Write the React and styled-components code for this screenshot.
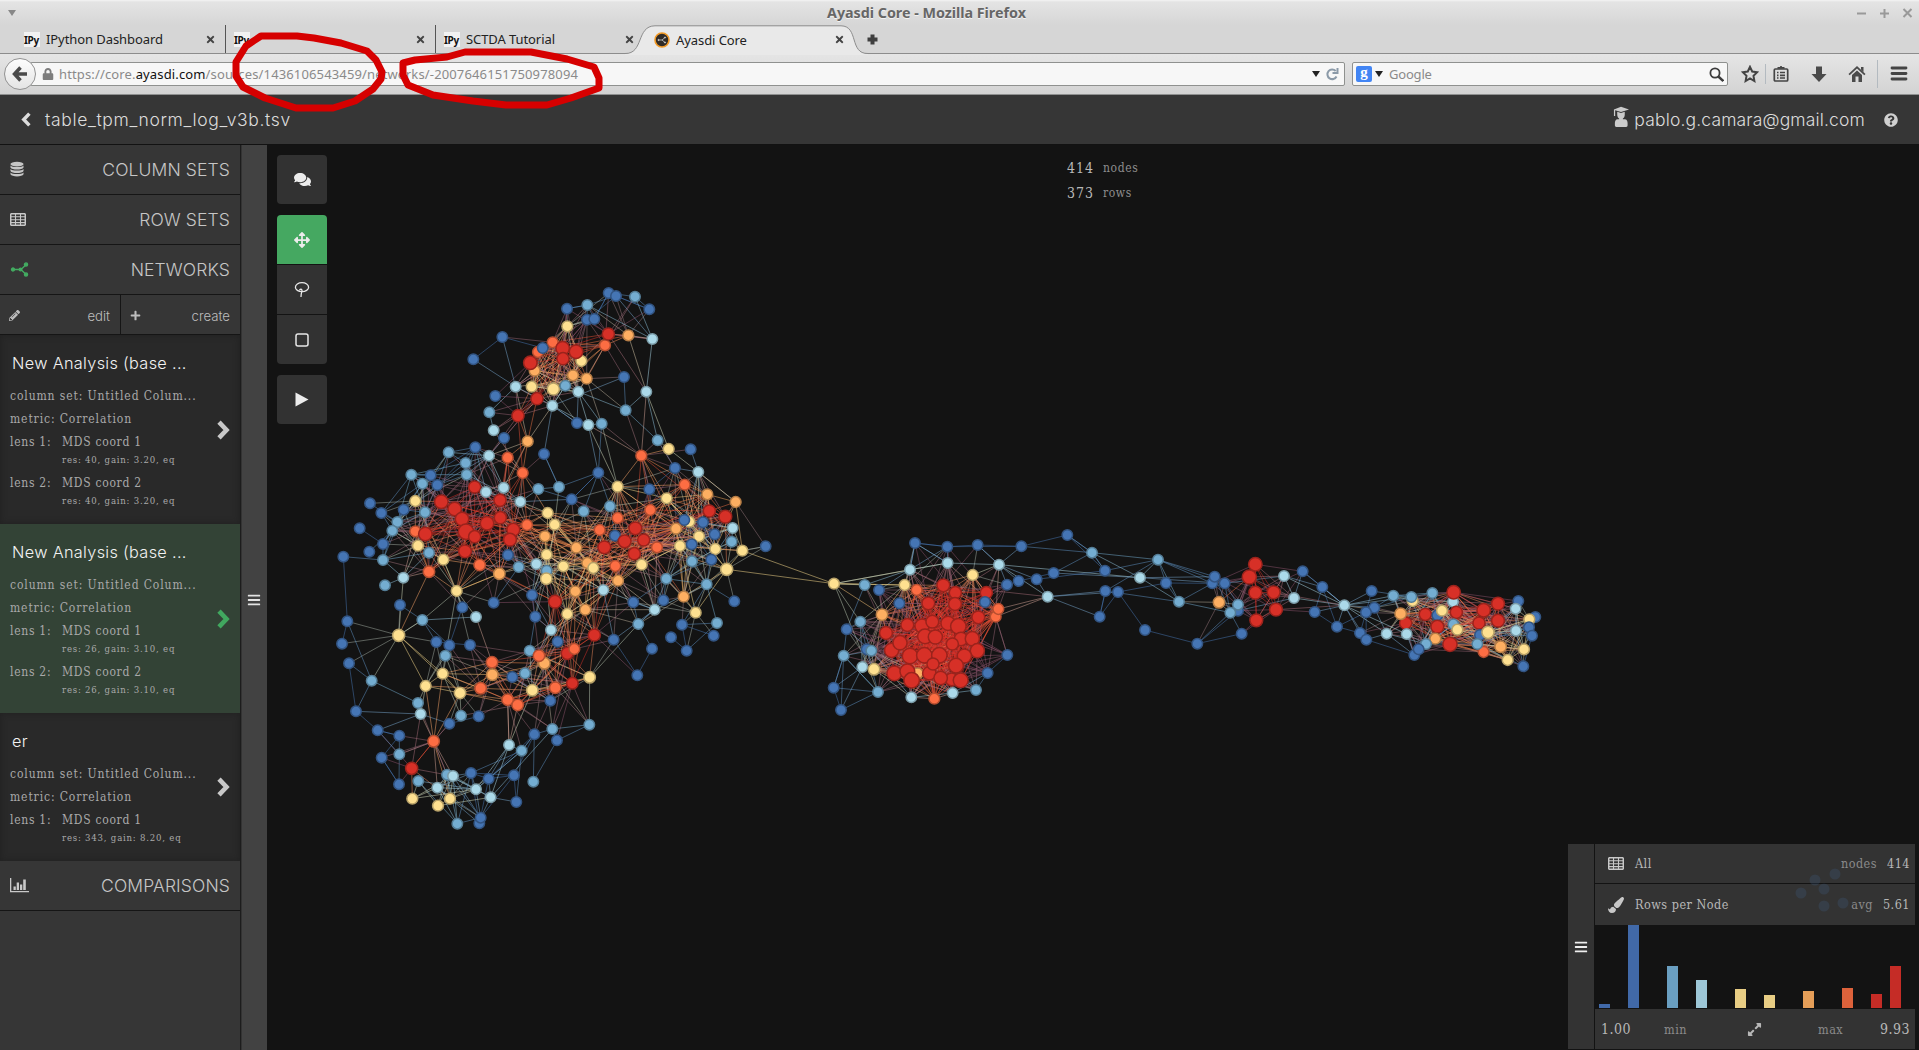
import React from 'react';
import styled, { createGlobalStyle, css } from 'styled-components';
import {
  FaComments, FaPencilAlt, FaPlus, FaArrowsAlt, FaPlay,
  FaBars, FaPaintBrush, FaExpandAlt, FaQuestionCircle, FaLock, FaTimes,
} from 'react-icons/fa';

const slab = `"DejaVu Serif Condensed", "DejaVu Serif", serif`;
const sans = `Inter, "Open Sans", sans-serif`;
const chromeFont = `"Noto Sans", "Open Sans", sans-serif`;

const Global = createGlobalStyle`
  * { box-sizing: border-box; }
  html, body { margin: 0; padding: 0; background: #131313; overflow: hidden; }
  svg { display: block; flex: none; }
`;

/* ---------- network data: three units per pixel, offset by group origin ---------- */

const GROUPS = [
  { id: 'a', x: 330, y: 280, nodes: `b 517 171,b 430 238,l 557 320,b 496 348,s 478 397,l 491 451,b 522 474,b 436 502,s 356 517,l 477 527,s 407 549,s 410 584,O 533 533,o 593 484,O 578 579,b 642 522,r 564 407,r 621 356,y 605 320,o 614 272,O 624 216,O 668 187,r 601 248 22,b 638 204,l 667 377,y 670 327 20,s 244 584,b 302 586,s 277 611,b 322 615,r 434 621,l 468 636,l 521 623,r 510 661,l 571 665,s 625 627,s 687 621,y 256 663,r 334 665 22,r 374 687 22,b 120 670,b 154 699,b 221 689,s 285 697,s 202 726,s 187 752,b 89 745,O 256 754,r 286 762 22,r 396 717 22,r 408 755 25,r 434 770,r 471 730 22,r 511 713,r 550 749 21,r 540 779 21,O 591 735,y 653 699,y 674 734,o 645 769,y 264 797,b 159 792` },
  { id: 'a', x: 550, y: 280, nodes: `b 51 86,s 112 75,b 176 39,b 198 48,s 255 50,b 298 88,b 111 119,b 133 117,y 52 139,O 165 196,r 175 162,o 235 166,l 307 177,r 38 205 22,y 94 243,r 78 215 22,r 39 236,o 69 286,o 110 296,s 46 317,l 85 335,b 222 291,l 289 335,s 227 391,b 81 429,l 115 435,s 155 431,s 323 481,y 356 507,b 422 508,O 274 527,b 375 564,l 445 576,b 145 578,b 65 658,s 101 694,y 203 620,s 180 679,b 298 628,O 404 614,y 350 655,O 301 690,o 472 643,o 557 666,r 478 693,r 526 710 21,y 418 725,b 403 720,b 459 727,l 548 744,y 447 769,b 494 763,o 378 746,O 203 714,O 149 750,r 256 745 21,b 195 767,r 224 784 21,r 281 780,O 321 802,o 79 803,s 545 785,y 390 798,b 425 793,y 496 807,y 577 812,b 647 799,r 163 802 21` },
  { id: 'a', x: 330, y: 540, nodes: `b 40 50,s 159 60,b 118 35,O 297 95 19,y 340 59,s 297 38,r 405 34 21,O 449 75 19,o 508 101 19,b 534 45,s 566 81,l 619 72,s 650 92,y 650 44,y 649 116 19,l 220 113,s 165 136,y 380 153,b 210 195,b 397 202,b 491 188,l 438 231,s 277 240,b 606 165,r 675 185 21,b 616 230,l 663 270,b 683 305,b 52 244,b 36 311,b 57 370,y 206 286 20,b 319 306,b 358 316,b 420 315,s 346 347,s 125 422,y 338 401,y 287 438,O 486 367 19,o 487 404 19,y 390 459 19,O 452 445 19,b 547 411,s 585 400,s 599 332,o 643 370 19,O 627 347 19,y 607 451 19,O 533 479 19,O 563 495 19,O 676 443 19,b 661 482,s 264 489,l 272 522,s 393 527,b 446 529,b 358 551,b 78 514,b 143 571,b 208 587,s 208 643,b 155 653,O 311 604 19,r 245 685,b 207 733,s 265 723,s 351 704,l 369 708,b 423 699,b 476 716,l 322 743,l 438 748,l 482 772,y 247 776,y 360 776,y 324 797,s 382 851,b 448 850,b 452 833,b 559 786,b 552 706,s 610 725,l 537 615,s 575 632,b 613 583,s 667 567,b 681 601` },
  { id: 'a', x: 560, y: 540, nodes: `r 223 41,s 396 64,b 454 59,y 500 88 20,s 440 133,y 245 74,O 166 78,o 82 69,y 100 84,y 10 79,o 174 122,s 319 116,l 130 150,o 46 154,b 220 187,b 310 181,o 371 170,b 523 184,o 76 209,y 22 222,l 284 209,y 407 218,s 235 252,b 366 254,s 471 249,b 161 299,b 333 292,b 461 287,r 103 285 20,b 276 326,b 380 332,r 22 340 20,O 43 327,b 232 406,y 89 412 19,r 37 430 19,s 88 554` },
  { id: 'e', x: 810, y: 510, nodes: `y 72 221,s 164 225,b 207 240,y 284 225,O 320 240,l 300 179,b 315 99,b 412 110,b 503 105,l 413 159,l 567 164,b 634 109,b 772 75,s 846 128,b 885 182,b 731 189,b 680 208,b 626 213,b 591 224,y 488 195,l 713 260,r 400 226 21,r 436 248,r 529 248,b 525 276,O 557 320,O 565 297,r 355 280 21,r 435 282 21,r 505 322 21,b 268 280,o 216 314 19,s 151 335,b 110 358,r 228 369 21,r 292 345 21,r 336 348 23,r 367 335 21,r 414 340 23,r 445 349 25,r 345 379 24,r 376 381 23,r 245 421 23,r 270 398 23,r 453 387 22,r 487 386 23,r 427 402,r 502 422 23,r 300 438 25,r 343 436 25,r 388 436 25,r 463 438 23,r 438 467 24,r 253 490 24,o 323 490,r 292 484 24,r 358 490 22,r 369 462,r 305 511 25,r 425 508 21,r 392 504 22,r 452 511 24,b 170 418,s 184 422,s 101 437,l 157 471,y 192 478 19,s 204 546,l 304 562,O 373 566,l 428 549,s 498 540,b 533 489,b 592 435,b 71 533,b 93 600,b 886 243,b 924 246,b 869 320` },
  { id: 'f', x: 1130, y: 510, nodes: `s 84 149,l 30 203,b 108 219,s 147 275,b 247 220,b 254 200,b 284 220,o 267 277 19,b 324 302,s 324 284,s 301 308,b 335 371,b 202 401,b 45 360,r 376 163 22,r 358 201 23,r 376 248 21,r 431 247 21,r 438 299 21,r 379 331 21,l 462 198,b 518 184,b 577 231,l 492 264,b 554 306,l 643 286,b 621 350,b 690 369,b 709 389,b 725 243,b 733 293,b 708 307,s 790 257,y 848 273,s 844 261,s 907 249,l 969 275,r 971 247 22,r 827 339,o 812 311 19,r 886 313 20,b 922 316,y 936 302,r 979 307,s 970 343,r 922 350 21,y 982 359,o 916 386,s 888 402,b 853 435,b 866 418,l 770 371,l 830 372,r 960 403 23,r 1104 281 21,r 1061 301 22,r 1047 339,r 1104 332 21,b 1165 273,l 1157 296,b 1216 321,y 1198 328,b 1197 352,l 1158 362,b 1206 377,b 1050 375,y 1074 367 20,O 1061 426,s 1042 402,o 1112 410 19,y 1182 418,y 1133 450,b 1180 469` },
];

const TONES = {
  b: [69, 117, 180], s: [116, 173, 209], l: [171, 217, 233], y: [254, 224, 144],
  o: [253, 174, 97], O: [252, 109, 67], r: [215, 48, 39],
};
const WEIGHT = { b: 0, s: 1, l: 2, y: 3, o: 4, O: 5, r: 6 };

const NODES = GROUPS.flatMap((g) => g.nodes.split(',').map((entry) => {
  const [tone, x, y, r] = entry.trim().split(' ');
  return {
    group: g.id, tone, x: g.x + x / 3, y: g.y + y / 3,
    r: (r ? Number(r) : tone === 'r' ? 20 : 'oOy'.includes(tone) ? 18 : 17.5) / 3 - 0.6,
  };
}));

/* empty regions that no link may cross: cx, cy, rx, ry */
const HOLES = [
  [578, 440, 21, 12], [596, 452, 18, 10], [568, 447, 10, 10], [505, 625, 22, 18], [470, 745, 33, 20], [376, 660, 22, 24],
  [620, 382, 17, 10], [538, 460, 8, 13], [365, 603, 14, 12], [450, 372, 14, 20], [578, 462, 14, 12],
  [625, 662, 20, 22], [545, 790, 12, 18], [1100, 577, 18, 8], [1140, 600, 18, 18],
  [1310, 625, 20, 8], [435, 703, 6, 10], [1040, 560, 26, 7], [372, 710, 8, 10], [615, 470, 8, 8],
];

const LONG_LINKS = [
  [502, 337, 474, 359], [502, 337, 543, 348], [502, 337, 516, 387], [474, 359, 516, 387],
  [344, 556, 347, 621], [742, 547, 834, 584], [727, 569, 834, 584], [766, 546, 742, 547],
  [834, 584, 905, 585], [834, 584, 865, 585], [834, 584, 910, 570], [834, 584, 882, 615],
  [834, 584, 861, 622], [834, 584, 948, 563], [834, 584, 860, 690], [834, 584, 906, 588],
  [647, 391, 651, 339], [647, 391, 641, 456], [646, 392, 608, 333], [624, 377, 552, 406],
  [624, 377, 626, 410], [646, 392, 669, 449], [646, 392, 658, 440], [626, 410, 658, 440],
  [626, 410, 641, 456], [579, 392, 626, 410], [578, 392, 602, 424], [587, 379, 624, 377],
  [588, 425, 641, 456], [588, 425, 618, 487], [602, 424, 618, 487], [588, 425, 598, 473], [602, 424, 598, 473],
  [598, 473, 560, 487], [598, 473, 572, 499], [598, 473, 584, 511], [552, 406, 544, 454], [544, 454, 559, 487], [544, 454, 523, 473],
  [552, 406, 577, 423], [651, 339, 608, 333], [628, 335, 646, 392], [641, 456, 649, 489], [641, 456, 675, 471],
  [567, 309, 608, 333], [587, 305, 616, 296], [608, 293, 635, 297], [616, 296, 649, 309], [635, 297, 651, 339],
  [608, 293, 567, 326], [608, 293, 605, 345], [616, 296, 628, 335], [635, 297, 608, 333], [649, 309, 628, 335],
  [649, 309, 608, 333], [587, 305, 628, 335], [567, 309, 563, 348], [587, 320, 576, 351], [594, 319, 608, 333],
  [587, 320, 563, 348], [594, 319, 567, 326], [608, 293, 594, 319], [649, 309, 616, 296], [587, 305, 651, 339],
  [616, 296, 651, 339], [635, 297, 605, 345], [567, 309, 563, 358], [587, 305, 553, 342], [567, 309, 587, 305],
  [399, 635, 347, 621], [399, 635, 342, 644], [399, 635, 349, 663], [399, 635, 372, 681],
  [399, 635, 426, 686], [399, 635, 443, 674], [399, 635, 403, 578], [399, 635, 400, 605], [399, 635, 460, 693], [399, 635, 436, 642],
  [399, 635, 422, 620], [399, 635, 429, 572], [372, 681, 347, 621], [372, 681, 349, 663], [372, 681, 356, 711],
  [372, 681, 418, 703], [349, 663, 356, 711], [356, 711, 378, 730], [356, 711, 420, 714], [422, 620, 476, 617],
  [457, 591, 443, 560], [457, 591, 499, 574], [457, 591, 463, 607], [499, 574, 532, 584], [534, 603, 556, 557],
  [378, 730, 399, 754], [378, 730, 420, 714], [378, 730, 399, 736], [433, 741, 412, 768], [433, 741, 447, 775], [433, 741, 453, 776],
  [433, 741, 418, 703], [433, 741, 421, 714], [433, 741, 449, 724], [433, 741, 399, 736], [433, 741, 399, 754],
  [433, 741, 443, 674], [433, 741, 460, 693], [433, 741, 426, 686], [382, 758, 433, 741], [382, 758, 399, 784],
  [509, 745, 508, 700], [509, 745, 518, 705], [509, 745, 489, 779], [522, 751, 489, 779], [509, 745, 476, 787], [534, 734, 522, 751],
  [534, 734, 514, 775], [534, 734, 489, 779], [553, 729, 491, 797], [557, 740, 533, 782], [534, 734, 534, 782], [589, 725, 557, 740],
  [590, 677, 589, 725], [572, 683, 589, 725], [557, 668, 589, 725], [590, 677, 614, 640], [637, 675, 652, 649], [614, 640, 637, 675],
  [572, 683, 557, 740], [590, 677, 637, 620], [594, 635, 637, 675], [569, 650, 552, 729], [557, 668, 534, 734], [572, 683, 552, 729],
  [915, 543, 947, 547], [947, 547, 978, 545], [947, 547, 1021, 546], [978, 545, 1021, 546], [1021, 546, 1067, 535], [1021, 546, 1092, 553],
  [1067, 535, 1092, 553], [1067, 535, 1105, 571], [1092, 553, 1054, 573], [1092, 553, 1158, 560], [1092, 553, 1105, 571], [1092, 553, 1140, 578],
  [1054, 573, 1140, 578], [1105, 571, 1158, 560], [1037, 579, 1105, 571], [999, 565, 1140, 578], [1048, 597, 1105, 591], [1048, 597, 1118, 592],
  [1048, 597, 1100, 617], [1105, 591, 1158, 560], [1118, 592, 1166, 583], [1105, 591, 1179, 602], [1100, 617, 1105, 591], [1100, 617, 1118, 592],
  [1113, 597, 1145, 630], [1145, 630, 1197, 644], [1197, 644, 1242, 634], [1197, 644, 1230, 613], [1197, 644, 1219, 602], [1197, 644, 1238, 610],
  [1158, 560, 1212, 583], [1158, 560, 1214, 577], [1158, 560, 1224, 583], [1140, 578, 1214, 577], [1140, 578, 1179, 602], [1166, 583, 1212, 583],
  [1179, 602, 1212, 583], [1179, 602, 1219, 602], [1179, 602, 1230, 613], [1179, 602, 1166, 583], [1158, 560, 1179, 602], [1140, 578, 1224, 583],
  [999, 565, 1048, 597], [978, 545, 999, 565], [915, 543, 910, 570], [915, 543, 948, 563], [948, 563, 999, 565], [999, 565, 1037, 579],
  [1048, 597, 996, 617], [1048, 597, 945, 590], [1007, 655, 996, 617], [1007, 655, 988, 673], [988, 673, 976, 690], [1007, 655, 977, 640], [1007, 655, 961, 645],
  [834, 688, 841, 710], [834, 688, 878, 692], [841, 710, 878, 692], [834, 688, 844, 656], [841, 710, 844, 656], [841, 710, 862, 667],
  [844, 656, 878, 692], [834, 688, 862, 667], [1302, 571, 1344, 605], [1302, 571, 1322, 587], [1284, 576, 1344, 605],
  [1322, 587, 1344, 605], [1322, 587, 1337, 627], [1344, 605, 1294, 598], [1344, 605, 1276, 609], [1344, 605, 1315, 612], [1315, 612, 1337, 627],
  [1344, 605, 1372, 591], [1344, 605, 1366, 639], [1344, 605, 1360, 633], [1344, 605, 1386, 634], [1344, 605, 1406, 634], [1344, 605, 1401, 614],
  [1344, 605, 1374, 608], [1344, 605, 1393, 596], [1344, 605, 1411, 597], [1344, 605, 1276, 592], [1337, 627, 1360, 633], [1366, 639, 1414, 655],
  [589, 725, 553, 729], [620, 539, 742, 547], [765, 546, 736, 502], [736, 502, 698, 472], [709, 473, 736, 502], [691, 449, 698, 472],
];

const nearest = (x, y) => NODES.reduce((best, n, i) => {
  const d = (n.x - x) ** 2 + (n.y - y) ** 2;
  return d < best.d ? { i, d } : best;
}, { i: 0, d: Infinity }).i;

const inHole = (a, b) => HOLES.some(([cx, cy, rx, ry]) => [0.2, 0.35, 0.5, 0.65, 0.8].some((t) => {
  const px = a.x + (b.x - a.x) * t;
  const py = a.y + (b.y - a.y) * t;
  return ((px - cx) / rx) ** 2 + ((py - cy) / ry) ** 2 < 1;
}));

const hash = (i, j) => {
  const v = Math.sin(i * 127.1 + j * 311.7) * 43758.5453;
  return v - Math.floor(v);
};

/* dense areas, where links reach further: cx, cy, radius */
const CORES = [[560, 365, 55], [455, 530, 88], [640, 540, 95], [560, 560, 70], [575, 620, 65], [500, 690, 75], [470, 785, 60], [930, 640, 100], [1255, 595, 45], [1465, 620, 95]];
const inCore = (n) => CORES.some(([cx, cy, r]) => Math.hypot(n.x - cx, n.y - cy) < r);

function buildLinks() {
  const links = [];
  for (let i = 0; i < NODES.length; i += 1) {
    for (let j = i + 1; j < NODES.length; j += 1) {
      const a = NODES[i];
      const b = NODES[j];
      if (a.group !== b.group) continue;
      const d = Math.hypot(a.x - b.x, a.y - b.y);
      const heat = (WEIGHT[a.tone] + WEIGHT[b.tone]) / 12;
      const dense = inCore(a) && inCore(b);
      const reach = (dense ? 54 : 38) + heat * 38;
      if (d > reach) continue;
      const chance = ((dense ? 0.62 : 0.42) + heat * 0.35) * (1.15 - (d / reach) * 0.65);
      if (hash(i, j) > chance || inHole(a, b)) continue;
      links.push([a, b]);
    }
  }
  LONG_LINKS.forEach(([x1, y1, x2, y2]) => links.push([NODES[nearest(x1, y1)], NODES[nearest(x2, y2)]]));
  return links;
}
const LINKS = buildLinks();

const MAUVE = [135, 82, 105];
const blend = (p, q) => {
  const span = Math.abs(WEIGHT[p] - WEIGHT[q]);
  const pull = span > 3 ? 0.45 : 0;
  return `rgb(${TONES[p].map((v, k) => Math.round(((v + TONES[q][k]) / 2) * (1 - pull) + MAUVE[k] * pull)).join(',')})`;
};
const solid = (t, f = 1) => `rgb(${TONES[t].map((v) => Math.round(v * f)).join(',')})`;

const GraphSvg = styled.svg`
  position: absolute;
  inset: 0;
`;

const Network = () => (
  <GraphSvg width="1652" height="905" viewBox="267 145 1652 905">
    <g strokeWidth="0.9" strokeOpacity="0.56">
      {LINKS.map(([a, b], i) => (
        <line key={i} x1={a.x} y1={a.y} x2={b.x} y2={b.y} stroke={blend(a.tone, b.tone)} />
      ))}
    </g>
    <g strokeWidth="1.5">
      {NODES.map((n, i) => (
        <circle key={i} cx={n.x} cy={n.y} r={n.r} fill={solid(n.tone)} stroke={solid(n.tone, 0.72)} />
      ))}
    </g>
  </GraphSvg>
);

/* ---------- browser chrome ---------- */

const Window = styled.div`
  position: relative;
  width: 1919px;
  height: 1050px;
  display: flex;
  flex-direction: column;
  background: #131313;
  overflow: hidden;
`;
const TitleBar = styled.div`
  height: 25px;
  flex: none;
  display: grid;
  grid-template-columns: 827px 1fr 81px;
  align-items: center;
  background: linear-gradient(#f4f4f4 0, #e4e4e4 2px, #d6d6d6 25px);
  font: 700 14.3px ${chromeFont};
  color: #666;
  text-shadow: 0 1px 0 #f3f3f3;
  white-space: nowrap;
`;
const MenuMark = styled.div`
  margin-left: 8px;
  width: 0;
  border: 4px solid transparent;
  border-top: 6px solid #888;
  border-bottom: 0;
`;
const TitleText = styled.span`
  letter-spacing: -0.01px;
`;
const WindowControls = styled.div`
  display: flex;
  gap: 12px;
  padding-left: 18px;
  svg { width: 11px; height: 11px; }
`;
const TabStrip = styled.div`
  height: 29px;
  flex: none;
  display: flex;
  background: #d6d6d6;
  border-bottom: 1px solid #8c8c8c;
  font: 13px ${chromeFont};
  color: #222;
`;
const Tab = styled.div`
  display: flex;
  align-items: center;
  width: ${(p) => p.$width}px;
  height: 28px;
  padding: 0 ${(p) => p.$end}px 0 ${(p) => p.$pad}px;
  ${(p) => p.$divider && css`border-right: 1px solid #555;`}
  white-space: nowrap;
`;
const ActiveTab = styled(Tab)`
  position: relative;
  height: 29px;
  > * { position: relative; }
  > svg:first-child { position: absolute; left: 0; top: 0; }
`;
const TabLabel = styled.span`
  flex: 1;
  margin-left: 6px;
  letter-spacing: -0.08px;
`;
const IPyMark = styled.span`
  width: 16px;
  height: 15px;
  background: #f2f2f2;
  color: #111;
  font: 700 10px/16px ${chromeFont};
  letter-spacing: -0.3px;
`;
const CloseMark = styled(FaTimes)`
  width: 11px;
  height: 11px;
  color: #444;
`;
const NewTab = styled.div`
  display: flex;
  align-items: center;
`;
const NavBar = styled.div`
  height: 41px;
  flex: none;
  display: flex;
  align-items: center;
  padding: 0 11px 0 4px;
  background: linear-gradient(#e5e5e5, #d3d3d3);
  border-bottom: 1px solid #8f9090;
  font: 13px ${chromeFont};
  color: #8a8a8a;
`;
const BackButton = styled.div`
  width: 32px;
  height: 32px;
  z-index: 1;
  display: grid;
  place-items: center;
  border: 1px solid #929292;
  border-radius: 50%;
  background: linear-gradient(#fdfdfd, #e4e4e4);
`;
const Field = styled.div`
  width: ${(p) => p.$width}px;
  height: 24px;
  display: flex;
  align-items: center;
  margin-left: ${(p) => p.$offset}px;
  padding: 0 ${(p) => p.$right}px 0 ${(p) => p.$left}px;
  background: #f7f7f7;
  border: 1px solid #8f918f;
  border-radius: 2px;
  white-space: nowrap;
`;
const Url = styled.span`
  flex: 1;
  margin-left: 5px;
  letter-spacing: ${(p) => p.$track}px;
  b { font-weight: 400; color: #111; }
`;
const Caret = styled.i`
  border: 4.5px solid transparent;
  border-top: 6px solid #222;
  border-bottom: 0;
  margin-right: ${(p) => p.$gap}px;
`;
const GoogleMark = styled.span`
  width: 16px;
  height: 16px;
  border-radius: 2px;
  background: #4285f4;
  color: #fff;
  font: 700 15px/12px "Liberation Serif", serif;
  text-align: center;
  margin-right: 3px;
`;
const NavTools = styled.div`
  display: flex;
  align-items: center;
  margin-left: 12px;
`;
const NavIcon = styled.svg`
  width: 18px;
  height: 18px;
  margin-left: ${(p) => p.$gap}px;
`;
const Rule = styled.span`
  width: 1px;
  height: ${(p) => p.$h}px;
  margin-left: ${(p) => p.$gap}px;
  background: #b3bac0;
`;
const Annotations = styled.svg`
  position: absolute;
  left: 0;
  top: 0;
  pointer-events: none;
`;

/* ---------- application ---------- */

const Header = styled.header`
  height: 50px;
  flex: none;
  display: flex;
  align-items: center;
  padding: 0 21px 0 21px;
  background: #363636;
  border-bottom: 1px solid #121212;
  color: #dcdcdc;
  font: 300 17.5px ${sans};
`;
const FileName = styled.span`
  flex: 1;
  margin-left: 14px;
  letter-spacing: 0.65px;
`;
const Account = styled.span`
  margin: 0 19px 0 5px;
  letter-spacing: 0.15px;
`;
const Body = styled.div`
  flex: 1;
  display: flex;
  min-height: 0;
`;
const Sidebar = styled.aside`
  width: 241px;
  flex: none;
  background: #363636;
  border-right: 1px solid #1c1c1c;
  color: #c6c6c6;
`;
const Section = styled.div`
  height: 50px;
  display: flex;
  align-items: center;
  justify-content: space-between;
  padding: 0 10px;
  border-bottom: 1px solid #151515;
  font: 300 17.5px ${sans};
  letter-spacing: 0.12px;
`;
const Actions = styled.div`
  height: 40px;
  display: grid;
  grid-template-columns: 121px 1fr;
  border-bottom: 1px solid #151515;
`;
const Action = styled.div`
  display: flex;
  align-items: center;
  justify-content: space-between;
  padding: 2px 10px 0 9px;
  border-right: ${(p) => (p.$divided ? '1px solid #151515' : 0)};
  font: 300 13.2px ${sans};
  color: #bdbdbd;
`;
const Card = styled.div`
  height: ${(p) => p.$height}px;
  display: flex;
  align-items: center;
  justify-content: space-between;
  padding: 0 10px;
  background: ${(p) => (p.$active ? '#334336' : '#292929')};
  box-shadow: ${(p) => (p.$active ? 'none' : 'inset 0 0 6px #202020')};
  color: ${(p) => (p.$active ? '#41a85f' : '#c8c8c8')};
`;
const CardBody = styled.div`
  align-self: flex-start;
  padding-top: 17px;
  font: 12px/23px ${slab};
  color: #a9a9a9;
  white-space: nowrap;
`;
const CardTitle = styled.div`
  padding-left: 2px;
  margin-bottom: 10px;
  font: 300 16.3px/23px ${sans};
  letter-spacing: 0.32px;
  color: #f2f2f2;
`;
const Line = styled.div`
  letter-spacing: 0.88px;
`;
const Lens = styled.div`
  display: grid;
  grid-template-columns: 52px auto;
  margin-bottom: 6px;
  letter-spacing: 0.72px;
  small { grid-column: 2; margin-top: -1px; font-size: 9.5px; line-height: 13px; letter-spacing: 0.8px; }
`;
const Splitter = styled.div`
  width: 26px;
  flex: none;
  display: grid;
  place-items: center;
  padding: 4px 1px 0 0;
  background: #424242;
  border-left: 1px solid #333;
  color: #e3e3e3;
  svg { width: 14px; height: 14px; }
`;
const Canvas = styled.main`
  position: relative;
  flex: 1;
  background: #131313;
`;
const Tools = styled.div`
  position: absolute;
  left: 10px;
  top: 10px;
  display: flex;
  flex-direction: column;
  gap: 11px;
`;
const ToolGroup = styled.div`
  display: flex;
  flex-direction: column;
  gap: 1px;
  border-radius: 4px;
  overflow: hidden;
`;
const Tool = styled.div`
  width: 50px;
  height: 49px;
  display: grid;
  place-items: center;
  background: ${(p) => (p.$on ? '#45a861' : '#323232')};
  color: #ececec;
`;
const Counts = styled.div`
  position: absolute;
  left: 770px;
  top: 11px;
  display: grid;
  grid-template-columns: 57px auto;
  column-gap: 9px;
  font: 12px/25px ${slab};
  letter-spacing: 0.6px;
  color: #8e8e8e;
  b { font-weight: 400; font-size: 14px; text-align: right; color: #b8b8b8; letter-spacing: 1px; }
`;
const Legend = styled.section`
  position: absolute;
  left: 1301px;
  top: 699px;
  display: flex;
  width: 347px;
  height: 205px;
  color: #b8b8b8;
  font: 12.5px ${slab};
  letter-spacing: 0.5px;
`;
const LegendGrip = styled.div`
  width: 26px;
  display: grid;
  place-items: center;
  background: #333;
  margin-right: 1px;
  color: #eee;
  svg { width: 14px; height: 14px; }
`;
const LegendMain = styled.div`
  flex: 1;
  display: flex;
  flex-direction: column;
`;
const LegendRow = styled.div`
  height: ${(p) => p.$height}px;
  display: flex;
  align-items: center;
  padding: 0 5px 0 13px;
  background: #333;
  margin-bottom: ${(p) => p.$gap || 0}px;
  svg { margin-right: 11px; color: #c8c8c8; }
`;
const Grow = styled.span`
  flex: 1;
`;
const Muted = styled.span`
  color: #8a8a8a;
  margin-right: 10px;
`;
const Histogram = styled.div`
  height: 84px;
  display: flex;
  align-items: flex-end;
  padding: 0 0 1px 4px;
`;
const Bar = styled.i`
  width: 11px;
  margin-right: ${(p) => p.$gap}px;
  background: ${(p) => p.$tone};
`;
const LegendFoot = styled.div`
  height: 40px;
  display: grid;
  grid-template-columns: 63px 83px 71px 1fr auto;
  align-items: center;
  padding: 0 5px 0 6px;
  background: #333;
  font-size: 14px;
  span { color: #8a8a8a; font-size: 12.5px; }
`;

const Chevron = ({ width, height, flip }) => (
  <svg width={width} height={height} viewBox="0 0 13 20" fill="none" stroke="currentColor" strokeWidth="4.600" transform={flip ? 'scale(-1 1)' : undefined}>
    <path d="M2 2.200L9.500 10 2 17.800" />
  </svg>
);
const GridIcon = () => (
  <svg width="16" height="13" viewBox="0 0 16 13" fill="none" stroke="#c9c9c9" strokeWidth="1.1">
    <rect x=".7" y=".7" width="14.6" height="11.6" rx="1" strokeWidth="1.5" />
    <path d="M1 3.800h14M1 6.700h14M1 9.600h14M5.500 1v11M10.500 1v11" />
  </svg>
);
const DatabaseIcon = () => (
  <svg width="14" height="17" viewBox="0 0 15 17" fill="#c6c6c6">
    <ellipse cx="7.5" cy="2.7" rx="7" ry="2.5" />
    <path d="M.5 4.300c1.500 2.200 12.500 2.200 14 0v2c-1.500 3-12.500 3-14 0zM.5 8c1.500 2.200 12.500 2.200 14 0v2c-1.500 3-12.500 3-14 0zM.5 11.700c1.500 2.200 12.500 2.200 14 0v2c-1.500 3-12.500 3-14 0z" />
  </svg>
);
const ShareIcon = () => (
  <svg width="19" height="15" viewBox="-1 0 19 15" fill="#43ab61" stroke="#43ab61" strokeWidth="1.300">
    <path d="M2.500 7.500H10L15.500 2.200M10 7.500L15.500 13" fill="none" />
    <circle cx="2" cy="7.500" r="1.500" /><circle cx="9.500" cy="7.500" r="1.300" />
    <circle cx="15" cy="2.500" r="1.600" /><circle cx="15" cy="12.500" r="1.600" />
  </svg>
);
const ChartIcon = () => (
  <svg width="19" height="15" viewBox="0 0 19 15" fill="#c9c9c9">
    <path d="M0 0h1.300v13H19v1.300H0zM3.500 8.500h2.300V12H3.500zM6.700 4.500H9V12H6.700zM10 6.500h2.300V12H10zM13.200 1.500h2.600V12h-2.600z" />
  </svg>
);
const LassoIcon = () => (
  <svg width="16" height="17" viewBox="0 0 16 17" fill="none" stroke="#e6e6e6" strokeWidth="1.300">
    <ellipse cx="8" cy="6.200" rx="6.600" ry="4.500" /><path d="M5.500 9.500c0-2 3-1.500 2.500.5-.3 1.500-1 2-1 6" />
  </svg>
);
const ScholarSvg = styled.svg`
  margin-bottom: 6px;
`;
const ScholarIcon = () => (
  <ScholarSvg width="16" height="22" viewBox="0 0 17 22" fill="#cbcbcb">
    <path d="M8.500 0L17 3 8.500 5.800 2.300 3.800V10H1V3zM4.500 5.500l4 1.300 4-1.300v3c0 2-1 3.500-2 4v1h2c2.200 0 3 2 3 4V20q0 1.500-1.500 1.500H3.500Q2 21.500 2 20v-2.500c0-2 .8-4 3-4h1.500v-1c-1-.5-2-2-2-4z" />
  </ScholarSvg>
);
const AyasdiIcon = () => (
  <svg width="16" height="16" viewBox="0 0 16 16">
    <circle cx="8" cy="8" r="7" fill="#302b26" stroke="#f39a25" strokeWidth="1.600" />
    <g fill="#ccc" stroke="#ccc" strokeWidth=".8"><path d="M4.500 8H8l3-2.500M8 8l3 2.500" fill="none" /><circle cx="4.500" cy="8" r=".6" /><circle cx="11" cy="5.500" r=".6" /><circle cx="11" cy="10.500" r=".6" /></g>
  </svg>
);

const ANALYSES = [
  { title: 'New Analysis (base ...', height: 189, lenses: ['res: 40, gain: 3.20, eq', 'res: 40, gain: 3.20, eq'] },
  { title: 'New Analysis (base ...', height: 189, active: true, lenses: ['res: 26, gain: 3.10, eq', 'res: 26, gain: 3.10, eq'] },
  { title: 'er', height: 148, lenses: ['res: 343, gain: 8.20, eq'] },
];
const BARS = [
  [4, '#4169a8', 18], [83, '#4169a8', 28], [42, '#6a9fc1', 18], [28, '#9dc7d7', 28], [19, '#e8cd84', 18],
  [13, '#e8cd84', 28], [17, '#e59e58', 28], [20, '#dd623b', 18], [14, '#c52c26', 8], [42, '#c52c26', 0],
];
const GHOSTS = [[1801, 893], [1815, 880], [1824, 889], [1835, 874], [1824, 906], [1843, 903]];

export default function App() {
  return (
    <Window>
      <Global />
      <TitleBar>
        <MenuMark />
        <TitleText>Ayasdi Core - Mozilla Firefox</TitleText>
        <WindowControls>
          {['M1 6.500h9', 'M1 6.500h9M5.500 2v9', 'M1.500 2l8 8M9.500 2l-8 8'].map((d) => (
            <svg key={d} viewBox="0 0 11 11" stroke="#999" strokeWidth="2"><path d={d} /></svg>
          ))}
        </WindowControls>
      </TitleBar>
      <TabStrip>
        <Tab $width={226} $pad={24} $end={9} $divider><IPyMark>IPy</IPyMark><TabLabel>IPython Dashboard</TabLabel><CloseMark /></Tab>
        <Tab $width={210} $pad={8} $end={9} $divider><IPyMark>IPy</IPyMark><TabLabel /><CloseMark /></Tab>
        <Tab $width={199} $pad={8} $end={0}><IPyMark>IPy</IPyMark><TabLabel>SCTDA Tutorial</TabLabel><CloseMark /></Tab>
        <ActiveTab $width={232} $pad={19} $end={22}>
          <svg width="234" height="29" viewBox="0 0 234 29" overflow="visible">
            <path d="M-10 28.500C9 29 1 1 20 .8H206C224 1 214 29 233 28.500V30H-10z" fill="#e9e9e9" />
            <path d="M-10 28.500C9 29 1 1 20 .8H206C224 1 214 29 233 28.500" fill="none" stroke="#8c8c8c" />
          </svg>
          <AyasdiIcon /><TabLabel>Ayasdi Core</TabLabel><CloseMark />
        </ActiveTab>
        <NewTab><svg width="11" height="11" viewBox="0 0 11 11" stroke="#3f3f3f" strokeWidth="4"><path d="M5.500 .5v10M.5 5.500h10" /></svg></NewTab>
      </TabStrip>
      <NavBar>
        <BackButton>
          <svg width="16" height="16" viewBox="0 0 16 16" fill="none" stroke="#4a4a4a" strokeWidth="3.500"><path d="M8.500 1.500L2.500 8l6 6.500M3 8h12" /></svg>
        </BackButton>
        <Field $width={1315} $offset={-6} $left={11} $right={5}>
          <FaLock size={12} color="#7d7d7d" />
          <Url $track={0.14}>https://core.<b>ayasdi.com</b>/sources/1436106543459/networks/-2007646151750978094</Url>
          <Caret $gap={6} />
          <svg width="13" height="14" viewBox="0 0 13 14" fill="none" stroke="#8b9aa8" strokeWidth="2"><path d="M10.500 9.500a4.800 4.800 0 1 1-.8-5.500M11.500 1v5h-5" /></svg>
        </Field>
        <Field $width={376} $offset={7} $left={3} $right={3}>
          <GoogleMark>g</GoogleMark><Caret $gap={1} /><Url $track={-0.2}>Google</Url>
          <svg width="15" height="15" viewBox="0 0 15 15" fill="none" stroke="#3c3c3c" strokeWidth="1.800"><circle cx="6" cy="6" r="4.600" /><path d="M9.300 9.500l5 4.500" strokeWidth="2.400" /></svg>
        </Field>
        <NavTools>
          <NavIcon $gap={1} viewBox="0 0 18 18" fill="none" stroke="#444" strokeWidth="2"><path d="M9 1.800l2.200 4.700 5 .7-3.700 3.600.9 5.200L9 13.500 4.600 16l.9-5.200L1.800 7.200l5-.7z" /></NavIcon>
          <Rule $gap={6} $h={20} />
          <NavIcon $gap={6} viewBox="0 0 18 18" fill="none" stroke="#444" strokeWidth="1.700"><rect x="2.300" y="4" width="13.400" height="12" rx="1" /><path d="M5.500 2.800h7M9 1v2M5 7.500h1.500M8 7.500h5M5 10.300h1.500M8 10.300h5M5 13h1.500M8 13h5" /></NavIcon>
          <NavIcon $gap={20} viewBox="0 0 18 18" fill="#4a4a4a"><path d="M6 1.500h6V9h4.500L9 17 1.500 9H6z" /></NavIcon>
          <NavIcon $gap={20} viewBox="0 0 18 18" fill="#4a4a4a"><path d="M9 1l8.500 8-1.200 1.200L9 3.500l-7.300 6.700L.5 9zM13 2h2.500v5L13 4.500zM4 10l5-4.500 5 4.500V17h-3.500v-5.500h-3V17H4z" /></NavIcon>
          <Rule $gap={11} $h={28} />
          <NavIcon $gap={12} viewBox="0 0 18 18" stroke="#444" strokeWidth="2.800" strokeLinecap="round"><path d="M2 3h14M2 8.500h14M2 14h14" /></NavIcon>
        </NavTools>
      </NavBar>

      <Header>
        <Chevron width={10} height={15} flip />
        <FileName>table_tpm_norm_log_v3b.tsv</FileName>
        <ScholarIcon />
        <Account>pablo.g.camara@gmail.com</Account>
        <FaQuestionCircle size={14} color="#d0d0d0" />
      </Header>

      <Body>
        <Sidebar>
          <Section><DatabaseIcon />COLUMN SETS</Section>
          <Section><GridIcon />ROW SETS</Section>
          <Section><ShareIcon />NETWORKS</Section>
          <Actions>
            <Action $divided><FaPencilAlt size={11} />edit</Action>
            <Action><FaPlus size={11} />create</Action>
          </Actions>
          {ANALYSES.map((a, i) => (
            <Card key={i} $height={a.height} $active={a.active}>
              <CardBody>
                <CardTitle>{a.title}</CardTitle>
                <Line>column set: Untitled Colum...</Line>
                <Line>metric: Correlation</Line>
                {a.lenses.map((l, k) => (
                  <Lens key={k}><span>lens {k + 1}:</span><span>MDS coord {k + 1}</span><small>{l}</small></Lens>
                ))}
              </CardBody>
              <Chevron width={13} height={20} />
            </Card>
          ))}
          <Section><ChartIcon />COMPARISONS</Section>
        </Sidebar>
        <Splitter><FaBars /></Splitter>
        <Canvas>
          <Network />
          <Tools>
            <ToolGroup><Tool><FaComments size={17} /></Tool></ToolGroup>
            <ToolGroup>
              <Tool $on><FaArrowsAlt size={16} /></Tool>
              <Tool><LassoIcon /></Tool>
              <Tool><svg width="14" height="14" viewBox="0 0 14 14" fill="none" stroke="#e6e6e6" strokeWidth="1.500"><rect x="1" y="1" width="12" height="12" rx="2" /></svg></Tool>
            </ToolGroup>
            <ToolGroup><Tool><svg width="14" height="15" viewBox="0 0 14 15" fill="#ececec"><path d="M.5.500v14L13.500 7.500z" /></svg></Tool></ToolGroup>
          </Tools>
          <Counts><b>414</b><span>nodes</span><b>373</b><span>rows</span></Counts>
          <Legend>
            <LegendGrip><FaBars /></LegendGrip>
            <LegendMain>
              <LegendRow $height={39} $gap={1}><GridIcon />All<Grow /><Muted>nodes</Muted>414</LegendRow>
              <LegendRow $height={41}><FaPaintBrush size={16} />Rows per Node<Grow /><Muted>avg</Muted>5.61</LegendRow>
              <Histogram>{BARS.map(([h, tone, gap], i) => <Bar key={i} $tone={tone} $gap={gap} style={{ height: h }} />)}</Histogram>
              <LegendFoot>1.00<span>min</span><FaExpandAlt size={15} /><span>max</span><div>9.93</div></LegendFoot>
            </LegendMain>
          </Legend>
          <GraphSvg width="1652" height="905" viewBox="267 145 1652 905" pointerEvents="none">
            {GHOSTS.map(([x, y]) => <circle key={`${x}-${y}`} cx={x} cy={y} r="5.500" fill="#4575b4" opacity=".17" />)}
          </GraphSvg>
        </Canvas>
      </Body>
      <Annotations width="640" height="120" fill="none" stroke="#d60000" strokeWidth="7" strokeLinejoin="round">
        <path d="M261 36H297L314 38 341 43 367 51 376 60 382 72 381 79 373 89 355 101 333 108H296L265 98 243 87 236 76V62L246 46Z" />
        <path d="M465 52H531L567 59 594 67 599 78V88L571 98 547 105H506L473 101 433 95 408 85 403 75V63L415 60 447 57Z" />
      </Annotations>
    </Window>
  );
}
